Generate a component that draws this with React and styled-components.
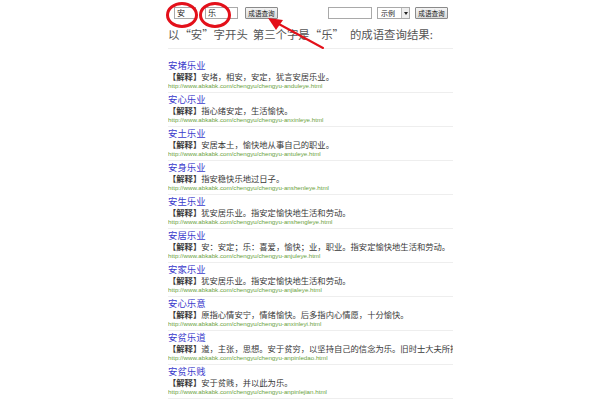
import React from 'react'
import { styled, createGlobalStyle } from 'styled-components'

const GlobalStyle = createGlobalStyle`
    body {
        margin: 0;
        background: #fff;
        font-family: "Noto Sans CJK SC", "Liberation Sans", sans-serif;
    }
`;

const Page = styled.div`
    position: relative;
    width: 600px;
    height: 400px;
    overflow: hidden;
`;

const Column = styled.div`
    margin-left: 168px;
    width: 285px;
`;

const TopBar = styled.div`
    display: flex;
    align-items: center;
    height: 26px;
`;

const Field = styled.div`
    position: relative;
    box-sizing: border-box;
    margin-left: ${({gap})=>gap}px;
    width: ${({w})=>w}px;
    height: 12px;
    border: 1px solid #a9a9a9;
    background: #fff;
    font-size: 8px;
    line-height: 10px;
    padding-left: 2px;
    color: #222;
`;

const Circle = styled.div`
    position: absolute;
    left: ${({left})=>left}px;
    top: -6px;
    width: 26px;
    height: 20px;
    border: 3px solid #e3101a;
    border-radius: 50%;
`;

const Button = styled.div`
    box-sizing: border-box;
    margin-left: ${({gap})=>gap}px;
    width: 33px;
    height: 12px;
    border: 1px solid #8a8a8a;
    border-radius: 1px;
    background: linear-gradient(#f4f4f4, #dcdcdc);
    font-size: 6.6px;
    line-height: 10px;
    text-align: center;
    color: #222;
    white-space: nowrap;
`;

const Select = styled.div`
    box-sizing: border-box;
    display: flex;
    align-items: center;
    margin-left: 5px;
    width: 33px;
    height: 12px;
    border: 1px solid #a9a9a9;
    font-size: 7px;
    line-height: 10px;
    color: #222;
    padding-left: 3px;
`;

const SelectText = styled.span`
    flex: 1;
`;

const SelectArrow = styled.span`
    box-sizing: border-box;
    width: 8px;
    height: 10px;
    border-left: 1px solid #bbb;
    background: #eee;
    display: flex;
    align-items: center;
    justify-content: center;
    &::after {
        content: "";
        border-left: 2px solid transparent;
        border-right: 2px solid transparent;
        border-top: 3px solid #222;
    }
`;

const Heading = styled.div`
    margin-top: 1px;
    padding-bottom: 7px;
    border-bottom: 1px solid #eeeeee;
    font-size: 11.4px;
    line-height: 14px;
    color: #555;
    white-space: nowrap;
`;

const Quote = styled.span`
    display: inline-block;
    width: 1em;
    text-align: ${({open})=>open ? 'right' : 'left'};
`;

const Gap = styled.span`
    display: inline-block;
    width: ${({w})=>w}px;
`;

const List = styled.div`
    margin-top: 10px;
`;

const Entry = styled.div`
    padding: 1px 0 2px;
    border-bottom: 1px solid #eeeeee;
    overflow: hidden;
`;

const Title = styled.div`
    font-size: 9.4px;
    line-height: 11px;
    color: #3b3bcc;
    white-space: nowrap;
`;

const Desc = styled.div`
    font-size: 8.3px;
    line-height: 11px;
    color: #383838;
    white-space: nowrap;
`;

const Label = styled.b`
    font-weight: 700;
`;

const Url = styled.div`
    font-family: "Liberation Sans", Arial, sans-serif;
    font-size: 6.2px;
    line-height: 8px;
    color: #6aa23c;
    white-space: nowrap;
`;

const Arrow = styled.svg`
    position: absolute;
    left: 0;
    top: 0;
    pointer-events: none;
`;

const items = [
    ['安堵乐业', '安堵，相安，安定，犹言安居乐业。', 'anduleye'],
    ['安心乐业', '指心绪安定，生活愉快。', 'anxinleye'],
    ['安土乐业', '安居本土，愉快地从事自己的职业。', 'antuleye'],
    ['安身乐业', '指安稳快乐地过日子。', 'anshenleye'],
    ['安生乐业', '犹安居乐业。指安定愉快地生活和劳动。', 'anshengleye'],
    ['安居乐业', '安：安定；乐：喜爱，愉快；业，职业。指安定愉快地生活和劳动。', 'anjuleye'],
    ['安家乐业', '犹安居乐业。指安定愉快地生活和劳动。', 'anjialeye'],
    ['安心乐意', '原指心情安宁，情绪愉快。后多指内心情愿，十分愉快。', 'anxinleyi'],
    ['安贫乐道', '道，主张，思想。安于贫穷，以坚持自己的信念为乐。旧时士大夫所推崇的处世态度。', 'anpinledao'],
    ['安贫乐贱', '安于贫贱，并以此为乐。', 'anpinlejian'],
];

export default function App() {
  return (
    <Page lang="zh-CN">
        <GlobalStyle />
        <Column>
            <TopBar>
                <Field gap={6} w={22}>安<Circle left={-9} /></Field>
                <Field gap={9} w={33}>乐<Circle left={-7} /></Field>
                <Button gap={7}>成语查询</Button>
                <Field gap={50} w={44} />
                <Select><SelectText>示例</SelectText><SelectArrow /></Select>
                <Button gap={5}>成语查询</Button>
            </TopBar>
            <Heading>
                以<Quote open>“</Quote>安<Quote>”</Quote>字开头<Gap w={5} />第三个字是<Quote open>“</Quote>乐<Quote>”</Quote><Gap w={6} />的成语查询结果:
            </Heading>
            <List>
                {items.map(([name, desc, slug]) => (
                    <Entry key={slug}>
                        <Title>{name}</Title>
                        <Desc><Label>【解释】</Label>{desc}</Desc>
                        <Url>http://www.abkabk.com/chengyu/chengyu-{slug}.html</Url>
                    </Entry>
                ))}
            </List>
        </Column>
        <Arrow width="600" height="60" viewBox="0 0 600 60">
            <line x1="323" y1="48" x2="277" y2="23" stroke="#e3101a" strokeWidth="2" strokeLinecap="round" />
            <polygon points="268,18 283,20 276,30" fill="#e3101a" />
        </Arrow>
    </Page>
  )
}
